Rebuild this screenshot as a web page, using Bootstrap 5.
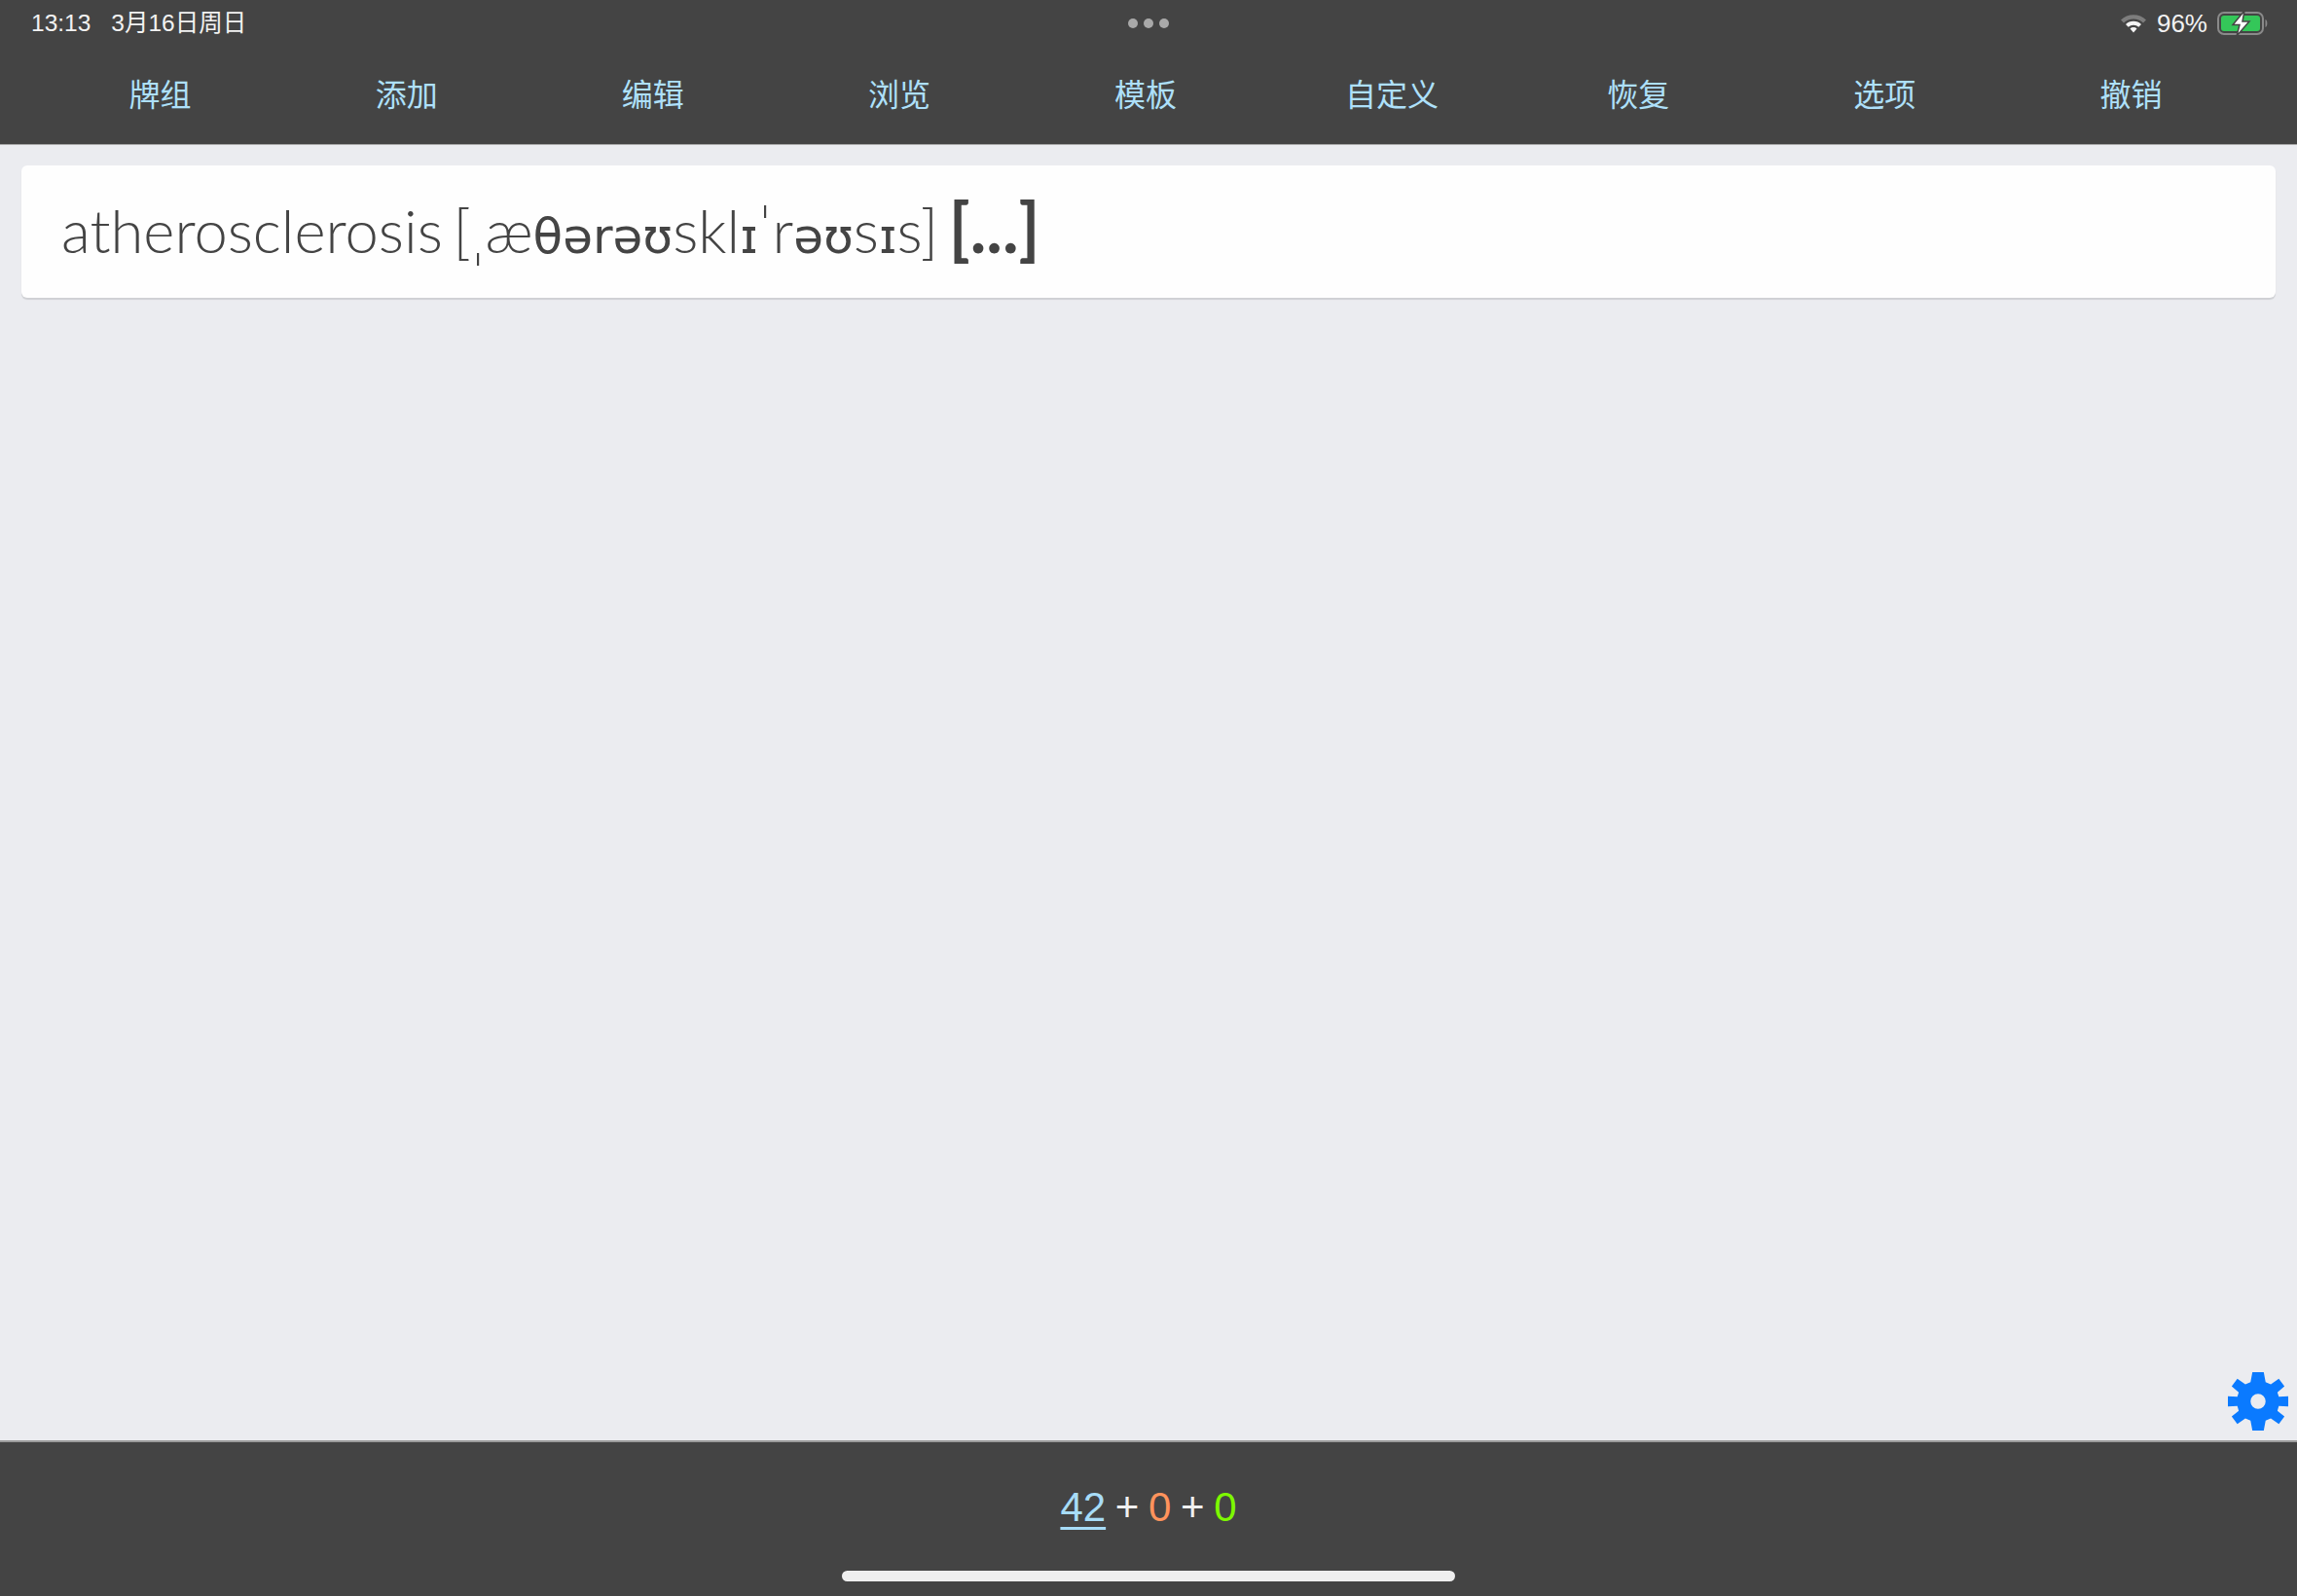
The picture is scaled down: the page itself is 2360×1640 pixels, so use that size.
<!DOCTYPE html>
<html lang="en">
<head>
    <meta charset="UTF-8">
    <title>atherosclerosis</title>
    <link href="https://cdn.jsdelivr.net/npm/bootstrap@5.3.3/dist/css/bootstrap.min.css" rel="stylesheet">
    <style>
        html, body { height: 100%; }
        body { background-color: #ebecf0; font-family: "Liberation Sans", "Noto Sans CJK SC", sans-serif; overflow: hidden; }
        .app-frame { height: 1640px; }
        .top-area { background: #444444; height: 149px; border-bottom: 1px solid #a8a8a8; }
        .status-row { height: 48px; padding: 0 28px 0 32px; color: #f2f2f2; font-size: 24.5px; position: relative; }
        .status-date { margin-left: 21px; }
        .status-pct { font-size: 26px; margin-left: 10px; margin-right: 10px; }
        .status-dots { position: absolute; left: 1159px; top: 19px; gap: 6px; }
        .status-dots i { display: block; width: 10px; height: 10px; border-radius: 50%; background: #a9a9a9; }
        .deck-nav { padding: 0 44px 0 38px; height: 99px; }
        .deck-nav a { color: #aee0fa; font-size: 32px; line-height: 1; text-decoration: none; font-family: "Noto Sans CJK SC", sans-serif; font-weight: 400; padding-bottom: 32px; }
        .main-area { padding: 21px 22px 0; position: relative; }
        .word-box { height: 136px; background: #fefefe; border: 0; border-radius: 6px; box-shadow: 0 2px 1px #cfd0d4; padding: 0 41px; color: #444444; font-size: 61.5px; font-family: Lato, "DejaVu Sans", sans-serif; font-weight: 300; word-spacing: -6px; }
        .word-line { margin-top: -9px; }
        .word-line strong { font-weight: 700; font-size: 70px; }
        .ipa-heavy { font-family: "DejaVu Sans", sans-serif; font-weight: 400; font-size: 50px; }
        .gear-btn { position: absolute; left: 2289px; top: 1409px; width: 62px; height: 62px; }
        .bottom-area { background: #444444; height: 160px; border-top: 2px solid #9c9c9c; position: relative; font-size: 42px; color: #f0f0f0; padding-top: 35px; word-spacing: -2px; }
        .count-new { color: #a7dcf7; text-decoration: underline; text-underline-offset: 6px; text-decoration-thickness: 3px; }
        .count-lrn { color: #ff935c; }
        .count-rev { color: #7df800; }
        .home-bar { position: absolute; left: 865px; bottom: 15px; width: 630px; height: 11px; border-radius: 6px; background: #efefef; }
    </style>
</head>
<body>
    <div class="app-frame d-flex flex-column">
        <!-- status bar + toolbar -->
        <div class="top-area flex-shrink-0">
            <div class="status-row d-flex align-items-center">
                <span>13:13</span>
                <span class="status-date">3月16日周日</span>
                <div class="status-dots d-flex"><i></i><i></i><i></i></div>
                <div class="ms-auto d-flex align-items-center">
                    <svg width="28" height="22" viewBox="0 0 28 22">
                        <path d="M1 7.5 A18.5 18.5 0 0 1 27 7.5 L24 10.5 A14.5 14.5 0 0 0 4 10.5 Z" fill="#7d7d7d"/>
                        <path d="M6 12 A11.5 11.5 0 0 1 22 12 L19.3 14.8 A7.8 7.8 0 0 0 8.7 14.8 Z" fill="#f5f5f5"/>
                        <path d="M10.5 16.5 A5 5 0 0 1 17.5 16.5 L14 20.5 Z" fill="#f5f5f5"/>
                    </svg>
                    <span class="status-pct">96%</span>
                    <svg width="54" height="26" viewBox="0 0 54 26">
                        <rect x="1" y="2" width="46" height="22" rx="6" fill="none" stroke="#8a8a8a" stroke-width="2"/>
                        <rect x="4" y="5" width="40" height="16" rx="3" fill="#34c759"/>
                        <path d="M49.500 9 C52 10 52 16 49.500 17 Z" fill="#8a8a8a"/>
                        <path d="M28 0 L16 14.500 H23 L20 26 L33 11 H26 Z" fill="#ffffff" stroke="#444444" stroke-width="1.500"/>
                    </svg>
                </div>
            </div>
            <nav class="deck-nav row row-cols-9 g-0 align-items-center m-0 flex-nowrap">
                <div class="col text-center"><a href="#">牌组</a></div>
                <div class="col text-center"><a href="#">添加</a></div>
                <div class="col text-center"><a href="#">编辑</a></div>
                <div class="col text-center"><a href="#">浏览</a></div>
                <div class="col text-center"><a href="#">模板</a></div>
                <div class="col text-center"><a href="#">自定义</a></div>
                <div class="col text-center"><a href="#">恢复</a></div>
                <div class="col text-center"><a href="#">选项</a></div>
                <div class="col text-center"><a href="#">撤销</a></div>
            </nav>
        </div>

        <!-- card -->
        <div class="main-area flex-grow-1">
            <div class="word-box card flex-row align-items-center">
                <span class="word-line">atherosclerosis [ˌæ<span class="ipa-heavy">θərəʊ</span>skl<span class="ipa-heavy">ɪ</span>ˈr<span class="ipa-heavy">əʊ</span>s<span class="ipa-heavy">ɪ</span>s] <strong>[...]</strong></span>
            </div>
        </div>

        <!-- gear lies over the page -->
        <svg class="gear-btn" viewBox="0 0 64 64">
            <path fill="#0a7aff" fill-rule="evenodd" d="M26 1 H38 L40 11.500 L45.500 14 L54 8 L60 16 L52.500 22.500 L54 27 L64 26.500 V37.500 L54 37 L52.500 42 L60 48 L54 56 L45.500 50 L40 52.500 L38 63 H26 L24 52.500 L18.500 50 L10 56 L4 48 L11.500 42 L10 37 L0 37.500 V26.500 L10 27 L11.500 22.500 L4 16 L10 8 L18.500 14 L24 11.500 Z M32 24 A8 8 0 1 0 32 40 A8 8 0 1 0 32 24 Z"/>
        </svg>

        <!-- counts -->
        <div class="bottom-area flex-shrink-0 text-center">
            <span class="count-new">42</span> + <span class="count-lrn">0</span> + <span class="count-rev">0</span>
            <div class="home-bar"></div>
        </div>
    </div>
    <script src="https://cdn.jsdelivr.net/npm/bootstrap@5.3.3/dist/js/bootstrap.bundle.min.js"></script>
</body>
</html>
